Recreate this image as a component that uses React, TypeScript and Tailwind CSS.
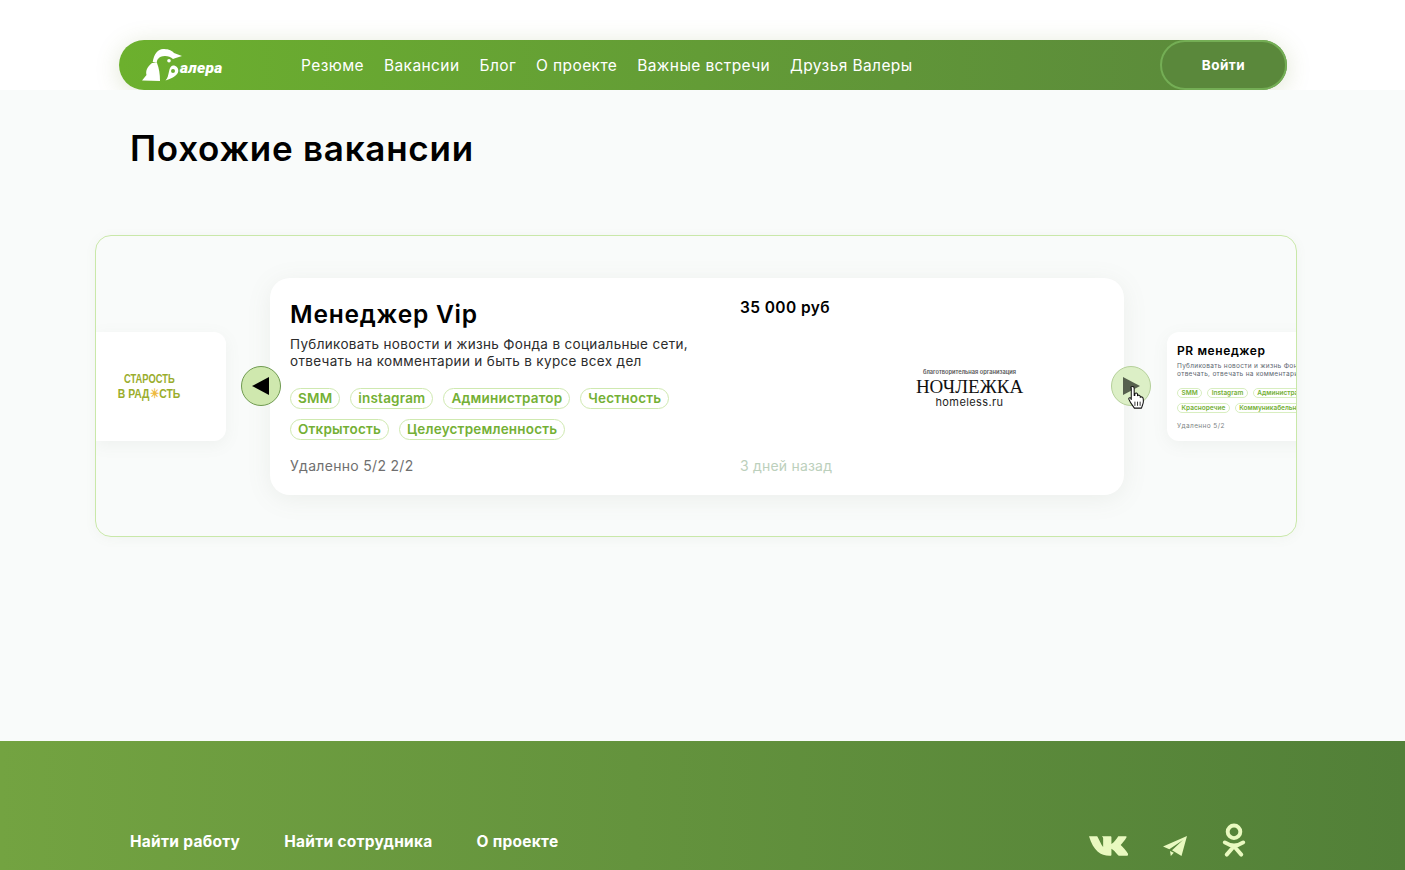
import React from "react";

const navItems = ["Резюме", "Вакансии", "Блог", "О проекте", "Важные встречи", "Друзья Валеры"];
const tags = ["SMM", "instagram", "Администратор", "Честность", "Открытость", "Целеустремленность"];
const miniTags = ["SMM", "Instagram", "Администратор", "Красноречие", "Коммуникабельность"];

function BirdLogo() {
  return (
    <svg width="40" height="35" viewBox="0 0 40 35" className="shrink-0">
      {/* dome with beak */}
      <path d="M10.700 14C12 6 16 1 21 1c4 0 8 .5 11 4l8 3-7 2.300-2 .7c-2-2-5-3-8-3-3 0-6 1-7 3-1 1-1 2-1.300 4z" fill="#fff" />
      <circle cx="27" cy="12.700" r="1.800" fill="#fff" />
      {/* wing */}
      <path d="M10 15C5 19 3.500 23 4.500 27L0 32.500 18 33C18 26 17 20 15 15z" fill="#fff" />
      {/* letter */}
      <path
        fillRule="evenodd"
        d="M31 17.500c3.500 0 5.500 2.500 5.300 5.500-.3 4-5 7-12.800 9.500 2.500-2.500 2.500-5 3.500-9 .7-3.500 2-6 4-6zM31 21a2 2 0 1 0 0 4 2 2 0 0 0 0-4z"
        fill="#fff"
      />
    </svg>
  );
}

function HandCursor() {
  return (
    <svg width="18" height="25" viewBox="0 0 17 24" className="absolute left-[16px] top-[18px]">
      <path
        d="M4 1.500c1 0 1.800.8 1.800 1.800V10h.6V8.200c1-.8 2.200-.5 2.600.4v1.600c1-.8 2.200-.5 2.600.5v1c1-.6 2.400-.2 2.700 1 .5 2 .4 4.500-.5 6.500l-1 3H6l-3.500-5-1.800-3.500c-.4-1 .8-2 1.800-1.200L3 14V3.300C2.200 2.300 3 1.500 4 1.500z"
        fill="#fff"
        stroke="#111"
        strokeWidth="1"
        strokeLinejoin="round"
      />
      <path d="M6.500 16v4M9 16v4M11.500 16v4" stroke="#111" strokeWidth="0.8" />
    </svg>
  );
}

export default function App() {
  return (
    <div className="h-[870px] overflow-hidden bg-[#f9fbfa] font-['Inter',sans-serif] text-black flex flex-col">
      {/* header */}
      <div className="h-[90px] bg-white pt-10 pl-[119px] pr-[118px] shrink-0 overflow-hidden">
        <div className="h-[50px] rounded-[25px] bg-gradient-to-r from-[#6cb02d] to-[#5a883b] flex items-center shadow-[0_4px_24px_rgba(120,140,60,0.22)]">
          <div className="w-[182px] pl-[23px] flex items-center shrink-0">
            <BirdLogo />
            <span className="text-white font-black italic text-[15.500px] tracking-[0.3px] font-['Roboto',sans-serif] -ml-[2px] mt-[8px]">алера</span>
          </div>
          <nav className="flex gap-5 text-[15.500px] leading-[20px] tracking-[0.4px] text-white pt-[2px]">
            {navItems.map((item) => (
              <span key={item}>{item}</span>
            ))}
          </nav>
          <button className="ml-auto w-[127px] h-[50px] rounded-[25px] border-2 border-[#74ae55] bg-[#5a883b] text-white text-[13.500px] tracking-[0.5px] font-bold">
            Войти
          </button>
        </div>
      </div>

      {/* title */}
      <h1 className="pl-[130px] pt-[36px] text-[35px] leading-[45px] font-semibold tracking-[0.75px]">Похожие вакансии</h1>

      {/* slider */}
      <div className="relative mt-[64px] ml-[95px] w-[1202px] h-[302px] rounded-2xl border border-[#c9e8a9] flex items-center gap-[44px] overflow-hidden shadow-[0_2px_12px_rgba(120,140,100,0.06)]">
        <div className="w-[130px] h-[109px] bg-white rounded-r-xl shrink-0 pr-[24px] pt-[39px] flex flex-col items-center text-[#9aad2c] font-['Liberation_Sans',sans-serif] font-bold uppercase shadow-[0_4px_16px_rgba(120,130,110,0.08)]">
          <span className="text-[13px] leading-[15px] whitespace-nowrap scale-x-[0.72]">Старость</span>
          <span className="text-[13px] leading-[15px] whitespace-nowrap scale-x-[0.8]">в рад<span className="text-[#eeb93f]">☀</span>сть</span>
        </div>

        <div className="w-[854px] h-[217px] bg-white rounded-[20px] shrink-0 shadow-[0_4px_24px_rgba(120,130,110,0.1)] flex pl-5 pr-[100px] pt-[20px]">
          <div className="w-[450px] shrink-0 flex flex-col">
            <h2 className="text-[24.500px] leading-[32px] font-semibold tracking-[0.8px]">Менеджер Vip</h2>
            <p className="mt-[6px] text-[13.500px] leading-[17px] tracking-[0.33px] text-[#2c2c2c] whitespace-nowrap">
              Публиковать новости и жизнь Фонда в социальные сети,<br />
              отвечать на комментарии и быть в курсе всех дел
            </p>
            <div className="mt-[18px] flex flex-wrap gap-x-[10px] gap-y-[10px] w-[400px]">
              {tags.map((tag) => (
                <span
                  key={tag}
                  className="h-[21px] px-[7px] rounded-full border border-[#cfe9b0] text-[#74b035] text-[13.500px] leading-[18px] tracking-[0.2px] font-semibold whitespace-nowrap"
                >
                  {tag}
                </span>
              ))}
            </div>
            <div className="mt-[17px] text-[14px] leading-[18px] tracking-[0.3px] text-[#6f6f6f]">Удаленно 5/2 2/2</div>
          </div>
          <div className="flex-1 flex flex-col">
            <div className="text-[15.500px] leading-[20px] font-semibold tracking-[0.4px]">35 000 руб</div>
            <div className="flex-1 relative">
              <div className="absolute left-[177px] top-[51px] w-[105px] flex flex-col items-center text-center">
                <span className="text-[5.700px] leading-[6px] font-semibold text-[#555] whitespace-nowrap">благотворительная организация</span>
                <span className="mt-[2px] font-['Liberation_Serif',serif] text-[19px] leading-[20px] text-[#111]">НОЧЛЕЖКА</span>
                <span className="text-[11px] leading-[10px] tracking-[0.4px] text-[#222]">homeless.ru</span>
              </div>
            </div>
            <div className="mb-[20px] text-[14px] leading-[18px] tracking-[0.2px] text-[#bcd0bc]">3 дней назад</div>
          </div>
        </div>

        <div className="w-[170px] h-[109px] bg-white rounded-l-xl shrink-0 -ml-px overflow-hidden pl-[10px] pt-[11px] shadow-[0_4px_16px_rgba(120,130,110,0.08)]">
          <div className="text-[12px] leading-[15px] font-semibold tracking-[0.6px] whitespace-nowrap">PR менеджер</div>
          <p className="mt-[4px] text-[6.500px] leading-[8.500px] tracking-[0.3px] text-[#5c6670] whitespace-nowrap">
            Публиковать новости и жизнь Фонда<br />
            отвечать, отвечать на комментарии
          </p>
          <div className="mt-[9px] flex flex-wrap gap-x-[5px] gap-y-[5px] w-[190px]">
            {miniTags.map((tag) => (
              <span
                key={tag}
                className="h-[10px] px-[3.500px] rounded-full border border-[#d8eec0] text-[#74b035] text-[6.500px] leading-[8px] font-semibold whitespace-nowrap"
              >
                {tag}
              </span>
            ))}
          </div>
          <div className="mt-[9px] text-[6.500px] leading-[9px] tracking-[0.4px] text-[#7c8484]">Удаленно 5/2</div>
        </div>

        <button className="absolute left-[145px] top-[130px] w-10 h-10 rounded-full border border-[#6f9a50] bg-[#cfe8ae] flex items-center justify-center">
          <span className="w-0 h-0 border-y-[9px] border-y-transparent border-r-[17px] border-r-black -ml-[1px]" />
        </button>
        <button className="absolute left-[1015px] top-[130px] w-10 h-10 rounded-full border border-[#b5d09a] bg-[#dcefc6] flex items-center justify-center">
          <span className="w-0 h-0 border-y-[9px] border-y-transparent border-l-[17px] border-l-[#56604e] ml-[1px]" />
          <HandCursor />
        </button>
      </div>

      {/* footer */}
      <footer className="mt-auto h-[129px] shrink-0 bg-gradient-to-r from-[#73a341] to-[#528038] pl-[130px] pr-[159px] pt-[90px] flex items-start text-white">
        <div className="flex gap-[44px] text-[15.500px] leading-[22px] font-bold tracking-[0.27px]">
          <span>Найти работу</span>
          <span>Найти сотрудника</span>
          <span>О проекте</span>
        </div>
        <div className="ml-auto flex items-start gap-[35px] text-[#e9f9c0] -mt-[8px]">
          <svg width="39" height="22" viewBox="0 0 40 22" className="mt-[12px]" fill="currentColor">
            <path d="M0 1h8c.5 0 .8.300 1 1l4 8 1.500 2V3c0-1-1-1.500-1.500-2h9c.5 0 1 .500 1 1v7c3-2 5-5 7-8h8c.5 0 .6.500.5 1-1.500 3-4.500 6-6 8 2 2 6 6 7.500 9 .2.500-.1 2-.8 2h-8c-1 0-1.500-.500-2.500-1.800-1.500-2-3-4-5.700-5.500v6c0 .8-.3 1.300-1 1.300h-1C12 21 4.500 16 0 1z" />
          </svg>
          <svg width="24" height="20" viewBox="0 0 24 20" className="mt-[13px]" fill="currentColor">
            <path d="M24 0 0 10.500l6.300 2.800L20 4 9 14.300 18.500 20zM7 15l.8 5 3-3.200z" />
          </svg>
          <svg width="24" height="35" viewBox="0 0 24 36" fill="none" stroke="currentColor" strokeWidth="4" strokeLinecap="round">
            <circle cx="12" cy="9" r="6.500" />
            <path d="M2.500 20c6 4 13 4 19 0M12 24l-7.500 8.500M12 24l7.500 8.500" />
          </svg>
        </div>
      </footer>
    </div>
  );
}
